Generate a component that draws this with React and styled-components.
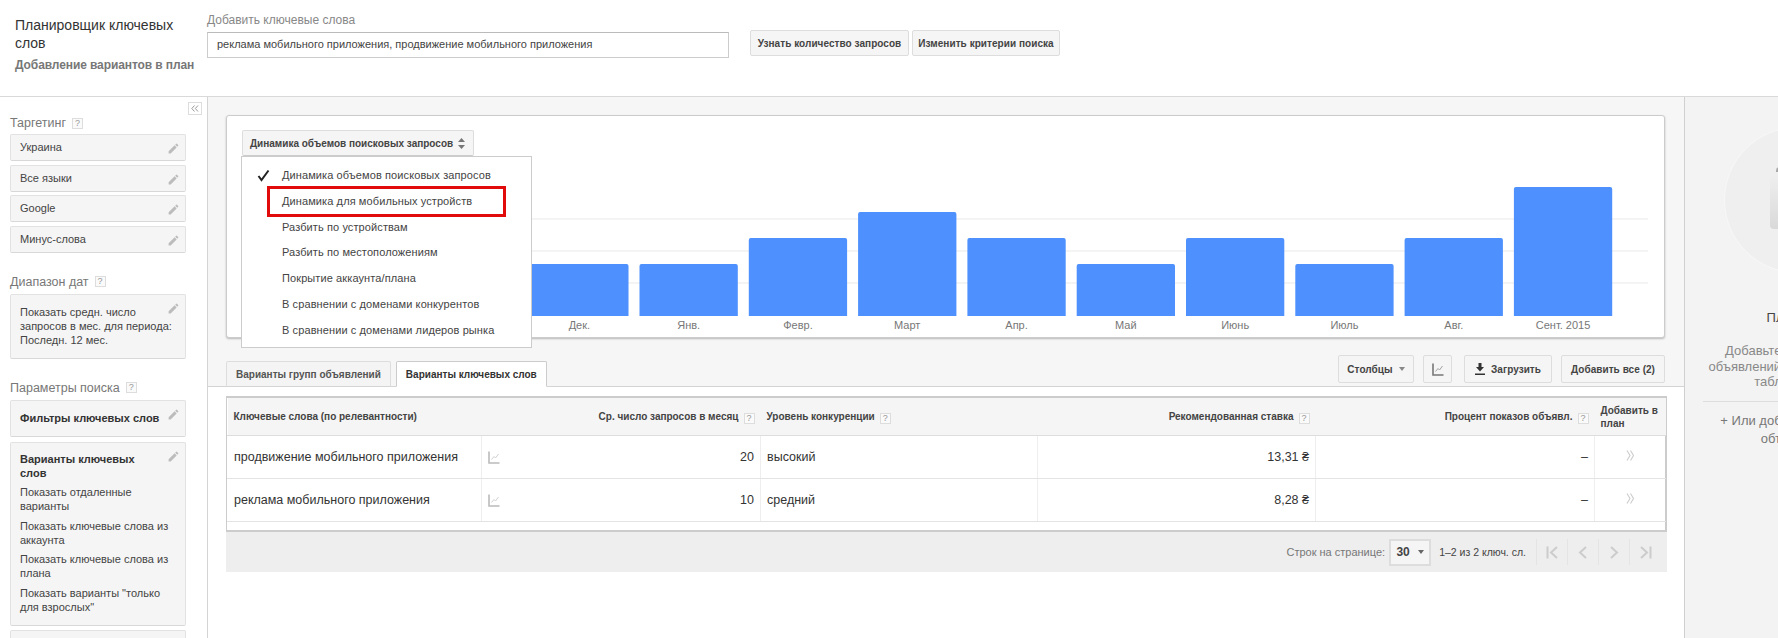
import React from "react";
import styled, { createGlobalStyle } from "styled-components";

const GlobalStyle = createGlobalStyle`
  html, body {
    margin: 0;
    padding: 0;
    overflow: hidden;
    background: #fff;
    font-family: "Liberation Sans", Arial, sans-serif;
  }
`;

// the first two months of the year sit behind the open menu
const months = [
  { label: "Дек.", top: 264 },
  { label: "Янв.", top: 264 },
  { label: "Февр.", top: 238 },
  { label: "Март", top: 212 },
  { label: "Апр.", top: 238 },
  { label: "Май", top: 264 },
  { label: "Июнь", top: 238 },
  { label: "Июль", top: 264 },
  { label: "Авг.", top: 238 },
  { label: "Сент. 2015", top: 187 },
];

const menuItems = [
  "Динамика объемов поисковых запросов",
  "Динамика для мобильных устройств",
  "Разбить по устройствам",
  "Разбить по местоположениям",
  "Покрытие аккаунта/плана",
  "В сравнении с доменами конкурентов",
  "В сравнении с доменами лидеров рынка",
];

const rows = [
  { keyword: "продвижение мобильного приложения", count: 20, level: "высокий", bid: "13,31 ₴" },
  { keyword: "реклама мобильного приложения", count: 10, level: "средний", bid: "8,28 ₴" },
];

const Page = styled.div`
  width: 1778px;
  height: 638px;
  overflow: hidden;
  display: flex;
  flex-direction: column;
`;

/* top bar */
const TopBar = styled.header`
  flex: 0 0 97px;
  box-sizing: border-box;
  display: flex;
  border-bottom: 1px solid #d9d9d9;
`;

const TitleBlock = styled.div`
  width: 207px;
  box-sizing: border-box;
  padding: 16px 0 0 15px;
`;

const Title = styled.div`
  font-size: 14px;
  line-height: 18px;
  color: #333;
  width: 180px;
`;

const Subtitle = styled.div`
  font-size: 12px;
  font-weight: bold;
  line-height: 16px;
  letter-spacing: -0.1px;
  color: #777;
  margin-top: 5px;
  white-space: nowrap;
`;

const SearchBlock = styled.div`
  width: 522px;
  padding-top: 13px;
`;

const SearchLabel = styled.div`
  font-size: 12px;
  line-height: 14px;
  color: #888;
  margin-bottom: 5px;
`;

const SearchInput = styled.div`
  box-sizing: border-box;
  height: 26px;
  border: 1px solid #ccc;
  border-top-color: #bbb;
  padding-left: 9px;
  font-size: 11px;
  line-height: 23px;
  color: #444;
`;

const HeadButtons = styled.div`
  display: flex;
  gap: 3px;
  padding: 30px 0 0 21px;
`;

const Button = styled.div`
  box-sizing: border-box;
  height: ${(p) => p.$h || 26}px;
  display: flex;
  align-items: center;
  justify-content: center;
  gap: 6px;
  width: ${(p) => p.$w}px;
  background: #f5f5f5;
  border: 1px solid #ddd;
  border-radius: 2px;
  font-size: 10px;
  font-weight: bold;
  letter-spacing: 0.05px;
  color: #444;
  white-space: nowrap;
`;

/* page body */
const Body = styled.div`
  flex: 1;
  display: flex;
  min-height: 0;
`;

const Sidebar = styled.aside`
  position: relative;
  flex: 0 0 207px;
  box-sizing: content-box;
  border-right: 1px solid #d4d4d4;
  padding: 18px 0 0;
  overflow: hidden;
`;

const CollapseButton = styled.div`
  position: absolute;
  top: 5px;
  left: 188px;
  box-sizing: border-box;
  width: 14px;
  height: 13px;
  border: 1px solid #ddd;
  display: flex;
  align-items: center;
  justify-content: center;
`;

const SideSection = styled.section`
  padding: 0 21px 0 10px;
  margin-bottom: ${(p) => p.$mb || 0}px;
  display: flex;
  flex-direction: column;
  gap: ${(p) => p.$gap || 4}px;
`;

const SideLabel = styled.div`
  display: flex;
  align-items: center;
  gap: 6px;
  height: 16px;
  font-size: 12.5px;
  color: #777;
`;

const Help = styled.span`
  display: inline-block;
  box-sizing: border-box;
  width: 11px;
  height: 11px;
  flex: none;
  border: 1px solid #ddd;
  background: #fafafa;
  color: #999;
  font-size: 9px;
  font-weight: normal;
  line-height: 9px;
  text-align: center;
`;

const SideCard = styled.div`
  position: relative;
  box-sizing: border-box;
  min-height: 27px;
  height: ${(p) => (p.$h ? p.$h + "px" : "auto")};
  background: #f5f5f5;
  border: 1px solid #e2e2e2;
  border-bottom: 1px solid #d8d8d8;
  border-radius: 2px;
  padding: ${(p) => p.$pad || "5px 24px 0 9px"};
  font-size: 11px;
  line-height: 14px;
  color: #444;
`;

const SideHeading = styled.div`
  font-size: 11px;
  font-weight: bold;
  line-height: 14px;
  color: #333;
`;

const SideOption = styled.div`
  margin-top: 5.5px;
  width: 152px;
`;

const PencilMark = styled.svg`
  position: absolute;
  top: 7px;
  right: 5px;
  width: 13px;
  height: 13px;
  fill: #bcbcbc;
`;

/* centre column */
const Main = styled.main`
  flex: 0 0 1476px;
  display: flex;
  flex-direction: column;
`;

const Band = styled.div`
  background: #f6f6f6;
  padding: 18px 19px 0 18px;
  border-bottom: 1px solid #d4d4d4;
`;

const ChartCard = styled.div`
  position: relative;
  box-sizing: border-box;
  height: 223px;
  background: #fff;
  border: 1px solid #ccc;
  border-radius: 3px;
  box-shadow: 0 1px 2px rgba(0, 0, 0, 0.25);
  padding: 14px 0 0 15px;
`;

const ChartSelect = styled.div`
  box-sizing: border-box;
  width: 232px;
  height: 26px;
  display: flex;
  align-items: center;
  justify-content: space-between;
  padding: 0 8px 0 7px;
  background: #f5f5f5;
  border: 1px solid #ddd;
  border-bottom-color: #ccc;
  border-radius: 2px;
  font-size: 10px;
  font-weight: bold;
  color: #444;
  white-space: nowrap;
`;

const ChartSvg = styled.svg`
  display: block;
  width: 1422px;
  height: 181px;
`;

const AxisLabel = styled.text`
  font-family: "Liberation Sans", Arial, sans-serif;
  font-size: 11px;
  fill: #777;
  text-anchor: middle;
`;

const Menu = styled.div`
  position: absolute;
  z-index: 2;
  top: 40px;
  left: 14px;
  box-sizing: border-box;
  width: 291px;
  height: 192px;
  background: #fff;
  border: 1px solid #ccc;
  padding-top: 6px;
`;

const MenuItem = styled.div`
  position: relative;
  height: 25.8px;
  padding-left: 40px;
  font-size: 11px;
  letter-spacing: 0.1px;
  line-height: 25.8px;
  color: #444;
  white-space: nowrap;
`;

const Check = styled.svg`
  position: absolute;
  left: 15px;
  top: 6px;
  width: 13px;
  height: 13px;
`;

const Highlight = styled.div`
  position: absolute;
  left: 25px;
  top: -3px;
  box-sizing: border-box;
  width: 239px;
  height: 31px;
  border: 3px solid #e20b0b;
`;

const TabRow = styled.div`
  display: flex;
  justify-content: space-between;
  align-items: flex-end;
  margin-top: 17px;
  margin-bottom: -1px;
`;

const Tabs = styled.div`
  display: flex;
  gap: 5px;
`;

const Tab = styled.div`
  box-sizing: border-box;
  height: 26px;
  padding: 1px 9px 0;
  display: flex;
  align-items: center;
  background: ${(p) => (p.$active ? "#fff" : "#f4f4f4")};
  border: 1px solid ${(p) => (p.$active ? "#ccc" : "#ddd")};
  border-bottom: 1px solid ${(p) => (p.$active ? "#fff" : "#d4d4d4")};
  border-radius: 2px 2px 0 0;
  font-size: 10px;
  font-weight: bold;
  color: ${(p) => (p.$active ? "#333" : "#555")};
  white-space: nowrap;
`;

const ToolButtons = styled.div`
  display: flex;
  margin-bottom: 4px;
`;

const ToolSpace = styled.div`
  width: ${(p) => p.$w}px;
`;

const Caret = styled.span`
  display: inline-block;
  width: 0;
  height: 0;
  border-left: 3.5px solid transparent;
  border-right: 3.5px solid transparent;
  border-top: 4px solid ${(p) => p.$color || "#888"};
`;

const TableArea = styled.div`
  padding: 9px 17px 0 18px;
`;

const TableWrap = styled.div`
  box-sizing: border-box;
  width: 1441px;
  height: 136px;
  border: 1px solid #ccc;
  border-top-width: 2px;
  border-bottom-width: 2px;
  border-right-width: 2px;
`;

const Table = styled.table`
  width: 1438px;
  table-layout: fixed;
  border-collapse: collapse;
`;

const Col = styled.col`
  width: ${(p) => p.$w}px;
`;

const Th = styled.th`
  height: 37px;
  padding: ${(p) => (p.$wrap ? "0 2px 0 6px" : "0 6px")};
  background: #f5f5f5;
  border-bottom: 1px solid #ddd;
  font-size: 10px;
  font-weight: bold;
  line-height: 13px;
  color: #444;
  text-align: ${(p) => p.$align || "left"};
  white-space: ${(p) => (p.$wrap ? "normal" : "nowrap")};
`;

const Td = styled.td`
  height: 42px;
  padding: 0 6px;
  border-bottom: 1px solid #e3e3e3;
  border-left: 1px solid ${(p) => (p.$noSep ? "transparent" : "#eee")};
  font-size: 12.5px;
  color: #333;
  text-align: ${(p) => p.$align || "left"};
  white-space: nowrap;
`;

const CountCell = styled.div`
  display: flex;
  justify-content: space-between;
  align-items: center;
`;

const HeadHelp = styled(Help)`
  margin-left: 5px;
  vertical-align: -1px;
`;

const Pager = styled.div`
  box-sizing: border-box;
  width: 1441px;
  height: 40px;
  background: #eee;
  display: flex;
  align-items: center;
  justify-content: flex-end;
  padding-right: 7px;
  font-size: 11px;
`;

const PagerLabel = styled.span`
  color: #777;
  margin-right: 4px;
`;

const PageSize = styled.div`
  box-sizing: border-box;
  width: 42px;
  height: 27px;
  background: #f5f5f5;
  border: 2px solid #ddd;
  display: flex;
  align-items: center;
  justify-content: center;
  gap: 8px;
  font-size: 12px;
  font-weight: bold;
  color: #444;
`;

const PagerCount = styled.span`
  color: #444;
  font-size: 10.5px;
  margin: 0 10px 0 8px;
  white-space: nowrap;
`;

const PagerNav = styled.div`
  width: 30px;
  height: 26px;
  border-left: 1px solid #e4e4e4;
  display: flex;
  align-items: center;
  justify-content: center;
`;

/* right panel */
const PlanPanel = styled.aside`
  flex: 0 0 224px;
  box-sizing: content-box;
  border-left: 1px solid #d0d0d0;
  background: #f3f3f3;
  padding: 30px 0 0;
  text-align: center;
`;

const PlanCircle = styled.div`
  box-sizing: border-box;
  width: 146px;
  height: 146px;
  margin: 0 auto;
  border-radius: 50%;
  background: #efefef;
  border: 1px solid #f8f8f8;
  display: flex;
  align-items: center;
  justify-content: center;
`;

const PlanBag = styled.div`
  position: relative;
  width: 54px;
  height: 57px;
  border-radius: 4px;
  background: linear-gradient(#f0f0f0, #d9d9d9);
  &::before {
    content: "";
    position: absolute;
    top: -5px;
    left: 6px;
    right: 6px;
    height: 5px;
    border-radius: 4px 4px 0 0;
    background: #a8a8a8;
  }
`;

const PlanTitle = styled.div`
  margin-top: 35px;
  font-size: 13px;
  line-height: 20px;
  color: #444;
  white-space: nowrap;
`;

const PlanText = styled.div`
  margin-top: 15px;
  font-size: 13px;
  line-height: 15.5px;
  color: #888;
  white-space: nowrap;
`;

const PlanRule = styled.div`
  height: 1px;
  margin: 11px 18px 10px;
  background: #ddd;
`;

const PlanLink = styled.div`
  font-size: 13px;
  line-height: 18px;
  color: #777;
  white-space: nowrap;
`;

const Pencil = () => (
  <PencilMark viewBox="0 0 24 24">
    <path d="M3 17.25V21h3.75L17.81 9.94l-3.75-3.75L3 17.25zM20.71 7.04a1 1 0 0 0 0-1.41l-2.34-2.34a1 1 0 0 0-1.41 0l-1.83 1.83 3.75 3.75 1.83-1.83z" />
  </PencilMark>
);

const TrendIcon = ({ color = "#bbb", line = "#ccc" }) => (
  <svg width="12" height="13" viewBox="0 0 12 13" fill="none">
    <path d="M1 0.5V12H11.5" stroke={color} strokeWidth="1.6" />
    <path d="M3.5 8.5L6 5.5L7.5 7L10.5 3" stroke={line} strokeWidth="0.9" />
  </svg>
);

const DoubleChevron = () => (
  <svg width="9" height="11" viewBox="0 0 9 11" fill="none" stroke="#ccc" strokeWidth="1.1">
    <path d="M1 0.5L4 5.5L1 10.5" />
    <path d="M4.5 0.5L7.5 5.5L4.5 10.5" />
  </svg>
);

const NavIcon = ({ d, w = 13 }) => (
  <svg width={w} height="13" viewBox={`0 0 ${w} 13`} fill="none" stroke="#ccc" strokeWidth="2">
    <path d={d} />
  </svg>
);

export default function App() {
  return (
    <Page>
      <GlobalStyle />
      <TopBar>
        <TitleBlock>
          <Title>Планировщик ключевых слов</Title>
          <Subtitle>Добавление вариантов в план</Subtitle>
        </TitleBlock>
        <SearchBlock>
          <SearchLabel>Добавить ключевые слова</SearchLabel>
          <SearchInput>реклама мобильного приложения, продвижение мобильного приложения</SearchInput>
        </SearchBlock>
        <HeadButtons>
          <Button $w={159}>Узнать количество запросов</Button>
          <Button $w={148}>Изменить критерии поиска</Button>
        </HeadButtons>
      </TopBar>
      <Body>
        <Sidebar>
          <CollapseButton>
            <svg width="8" height="7" viewBox="0 0 8 7" fill="none" stroke="#999" strokeWidth="1">
              <path d="M3.5 0.5L0.8 3.5L3.5 6.5M7 0.5L4.3 3.5L7 6.5" />
            </svg>
          </CollapseButton>
          <SideSection $mb={21} $gap={3.4}>
            <SideLabel>
              Таргетинг <Help>?</Help>
            </SideLabel>
            {["Украина", "Все языки", "Google", "Минус-слова"].map((t) => (
              <SideCard key={t}>
                {t}
                <Pencil />
              </SideCard>
            ))}
          </SideSection>
          <SideSection $mb={21}>
            <SideLabel>
              Диапазон дат <Help>?</Help>
            </SideLabel>
            <SideCard $h={65} $pad="10px 6px 0 9px">
              Показать средн. число
              <br />
              запросов в мес. для периода:
              <br />
              Последн. 12 мес.
              <Pencil />
            </SideCard>
          </SideSection>
          <SideSection $gap={4.5}>
            <SideLabel>
              Параметры поиска <Help>?</Help>
            </SideLabel>
            <SideCard $h={37} $pad="10px 6px 0 9px">
              <SideHeading>Фильтры ключевых слов</SideHeading>
              <Pencil />
            </SideCard>
            <SideCard $h={184} $pad="9px 6px 0 9px">
              <SideHeading>
                Варианты ключевых
                <br />
                слов
              </SideHeading>
              <SideOption>Показать отдаленные варианты</SideOption>
              <SideOption>Показать ключевые слова из аккаунта</SideOption>
              <SideOption>Показать ключевые слова из плана</SideOption>
              <SideOption>Показать варианты "только для взрослых"</SideOption>
              <Pencil />
            </SideCard>
            <SideCard $h={40}>
              <Pencil />
            </SideCard>
          </SideSection>
        </Sidebar>
        <Main>
          <Band>
            <ChartCard>
              <ChartSelect>
                Динамика объемов поисковых запросов
                <svg width="7" height="11" viewBox="0 0 7 11" fill="#777">
                  <path d="M3.5 0L7 4H0zM3.5 11L0 7H7z" />
                </svg>
              </ChartSelect>
              <Menu>
                {menuItems.map((item, i) => (
                  <MenuItem key={item}>
                    {i === 0 && (
                      <Check viewBox="0 0 13 13" fill="none" stroke="#222" strokeWidth="2">
                        <path d="M1.5 7L4.5 11L11.5 1.5" />
                      </Check>
                    )}
                    {item}
                    {i === 1 && <Highlight />}
                  </MenuItem>
                ))}
              </Menu>
              <ChartSvg viewBox="242 156 1422 181">
                {[219, 251, 283].map((y) => (
                  <line key={y} x1="242" x2="1648" y1={y} y2={y} stroke="#e9e9e9" />
                ))}
                {months.map((m, i) => {
                  const x = 530.2 + i * 109.3;
                  const w = 98.3;
                  return (
                    <g key={m.label}>
                      <path
                        d={`M${x} 316V${m.top + 2}Q${x} ${m.top} ${x + 2} ${m.top}H${x + w - 2}Q${x + w} ${m.top} ${x + w} ${m.top + 2}V316Z`}
                        fill="#4d90fe"
                      />
                      <AxisLabel x={x + w / 2} y="329">
                        {m.label}
                      </AxisLabel>
                    </g>
                  );
                })}
              </ChartSvg>
            </ChartCard>
            <TabRow>
              <Tabs>
                <Tab>Варианты групп объявлений</Tab>
                <Tab $active>Варианты ключевых слов</Tab>
              </Tabs>
              <ToolButtons>
                <Button $w={76} $h={28}>
                  Столбцы <Caret />
                </Button>
                <ToolSpace $w={9} />
                <Button $w={29} $h={28}>
                  <TrendIcon color="#777" line="#999" />
                </Button>
                <ToolSpace $w={12} />
                <Button $w={88} $h={28}>
                  <svg width="10" height="12" viewBox="0 0 10 12" fill="#333">
                    <path d="M3.5 0H6.5V4H9L5 8.5L1 4H3.5zM0 10.5H10V12H0z" />
                  </svg>
                  Загрузить
                </Button>
                <ToolSpace $w={9} />
                <Button $w={104} $h={28}>
                  Добавить все (2)
                </Button>
              </ToolButtons>
            </TabRow>
          </Band>
          <TableArea>
            <TableWrap>
              <Table>
                <colgroup>
                  <Col $w={254} />
                  <Col $w={279} />
                  <Col $w={277} />
                  <Col $w={278} />
                  <Col $w={279} />
                  <Col $w={71} />
                </colgroup>
                <thead>
                  <tr>
                    <Th>Ключевые слова (по релевантности)</Th>
                    <Th $align="right">
                      Ср. число запросов в месяц
                      <HeadHelp>?</HeadHelp>
                    </Th>
                    <Th>
                      Уровень конкуренции
                      <HeadHelp>?</HeadHelp>
                    </Th>
                    <Th $align="right">
                      Рекомендованная ставка
                      <HeadHelp>?</HeadHelp>
                    </Th>
                    <Th $align="right">
                      Процент показов объявл.
                      <HeadHelp>?</HeadHelp>
                    </Th>
                    <Th $wrap>Добавить в план</Th>
                  </tr>
                </thead>
                <tbody>
                  {rows.map((r) => (
                    <tr key={r.keyword}>
                      <Td $noSep>{r.keyword}</Td>
                      <Td>
                        <CountCell>
                          <TrendIcon />
                          {r.count}
                        </CountCell>
                      </Td>
                      <Td>{r.level}</Td>
                      <Td $align="right">{r.bid}</Td>
                      <Td $align="right">–</Td>
                      <Td $align="center">
                        <DoubleChevron />
                      </Td>
                    </tr>
                  ))}
                </tbody>
              </Table>
            </TableWrap>
            <Pager>
              <PagerLabel>Строк на странице:</PagerLabel>
              <PageSize>
                30 <Caret $color="#666" />
              </PageSize>
              <PagerCount>1–2 из 2 ключ. сл.</PagerCount>
              <PagerNav>
                <NavIcon d="M1.5 0.5V12.5M11 1L5 6.5L11 12" />
              </PagerNav>
              <PagerNav>
                <NavIcon w={10} d="M8 1L2 6.5L8 12" />
              </PagerNav>
              <PagerNav>
                <NavIcon w={10} d="M2 1L8 6.5L2 12" />
              </PagerNav>
              <PagerNav>
                <NavIcon d="M2 1L8 6.5L2 12M11.5 0.5V12.5" />
              </PagerNav>
            </Pager>
          </TableArea>
        </Main>
        <PlanPanel>
          <PlanCircle>
            <PlanBag />
          </PlanCircle>
          <PlanTitle>План пуст</PlanTitle>
          <PlanText>
            Добавьте варианты или
            <br />
            объявлений или варианты из
            <br />
            таблицы ниже
          </PlanText>
          <PlanRule />
          <PlanLink>
            + Или добавьте группу из
            <br />
            объявлений
          </PlanLink>
        </PlanPanel>
      </Body>
    </Page>
  );
}
